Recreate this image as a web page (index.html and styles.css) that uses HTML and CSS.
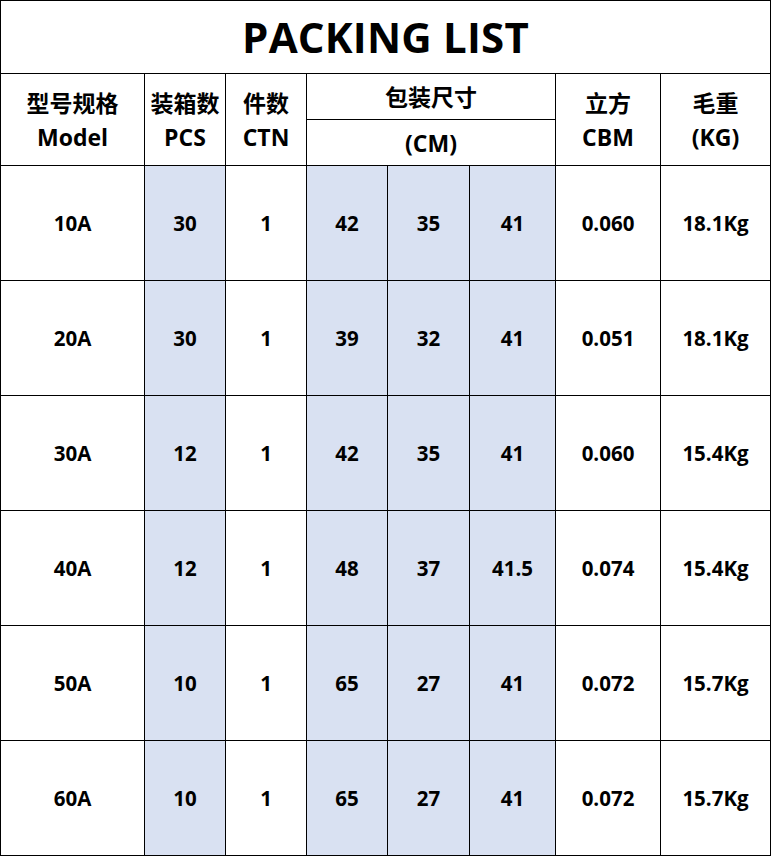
FILE: index.html
```html
<!DOCTYPE html>
<html>
<head>
<meta charset="utf-8">
<link rel="stylesheet" href="styles.css">
</head>
<body>
<table class="pl">
  <colgroup>
    <col class="c1"><col class="c2"><col class="c3"><col class="c4"><col class="c5"><col class="c6"><col class="c7"><col class="c8">
  </colgroup>
  <thead>
    <tr class="title-row"><th colspan="8" class="title">PACKING LIST</th></tr>
    <tr class="h1">
      <th rowspan="2">型号规格<br>Model</th>
      <th rowspan="2">装箱数<br>PCS</th>
      <th rowspan="2">件数<br>CTN</th>
      <th colspan="3">包装尺寸</th>
      <th rowspan="2">立方<br>CBM</th>
      <th rowspan="2">毛重<br>(KG)</th>
    </tr>
    <tr class="h2"><th colspan="3">(CM)</th></tr>
  </thead>
  <tbody>
    <tr><td>10A</td><td class="b">30</td><td>1</td><td class="b">42</td><td class="b">35</td><td class="b">41</td><td>0.060</td><td>18.1Kg</td></tr>
    <tr><td>20A</td><td class="b">30</td><td>1</td><td class="b">39</td><td class="b">32</td><td class="b">41</td><td>0.051</td><td>18.1Kg</td></tr>
    <tr><td>30A</td><td class="b">12</td><td>1</td><td class="b">42</td><td class="b">35</td><td class="b">41</td><td>0.060</td><td>15.4Kg</td></tr>
    <tr><td>40A</td><td class="b">12</td><td>1</td><td class="b">48</td><td class="b">37</td><td class="b">41.5</td><td>0.074</td><td>15.4Kg</td></tr>
    <tr><td>50A</td><td class="b">10</td><td>1</td><td class="b">65</td><td class="b">27</td><td class="b">41</td><td>0.072</td><td>15.7Kg</td></tr>
    <tr><td>60A</td><td class="b">10</td><td>1</td><td class="b">65</td><td class="b">27</td><td class="b">41</td><td>0.072</td><td>15.7Kg</td></tr>
  </tbody>
</table>
</body>
</html>
```
FILE: styles.css
```css
html, body {
  margin: 0;
  padding: 0;
  background: #fff;
}
.pl {
  border-collapse: collapse;
  table-layout: fixed;
  width: 770px;
  font-family: "Open Sans", "Noto Sans CJK SC", sans-serif;
  font-weight: 700;
  color: #000;
}
.c1 { width: 144px; }
.c2 { width: 81px; }
.c3 { width: 81px; }
.c4 { width: 81px; }
.c5 { width: 82px; }
.c6 { width: 86px; }
.c7 { width: 105px; }
.c8 { width: 110px; }
.pl th, .pl td {
  border: 1px solid #000;
  padding: 0;
  text-align: center;
  vertical-align: middle;
}
.title-row { height: 73px; }
.title {
  font-size: 42px;
  letter-spacing: 0.2px;
  line-height: 1;
}
.h1 { height: 46px; }
.h2 { height: 46px; }
.h1 th, .h2 th {
  font-size: 23px;
  line-height: 34px;
}
.pl tbody tr { height: 115px; }
.pl td {
  font-size: 20.5px;
}
.pl td.b { background: #d9e1f2; }
```
